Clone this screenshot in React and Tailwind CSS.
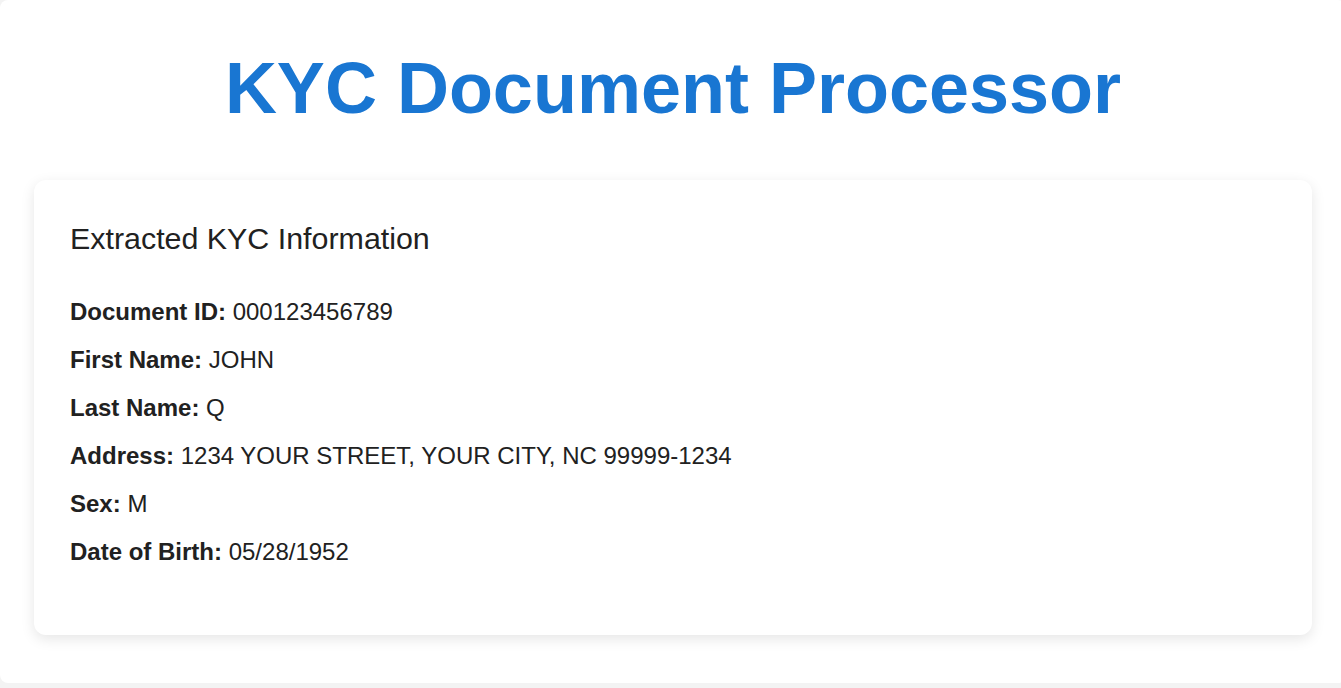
const fields = [
  { label: "Document ID:", value: "000123456789" },
  { label: "First Name:", value: "JOHN" },
  { label: "Last Name:", value: "Q" },
  { label: "Address:", value: "1234 YOUR STREET, YOUR CITY, NC 99999-1234" },
  { label: "Sex:", value: "M" },
  { label: "Date of Birth:", value: "05/28/1952" },
];

export default function App() {
  return (
    <div
      className="min-h-[688px] overflow-hidden bg-[#f3f3f3] text-[#212121]"
      style={{ fontFamily: '"Liberation Sans", Arial, sans-serif' }}
    >
      <div className="h-[683px] w-[1346px] rounded-lg bg-white pt-[52px]">
        <h1 className="text-center text-[72px] font-bold leading-[72px] text-[#1976d2]">
          KYC Document Processor
        </h1>

        <div className="mx-[34px] mt-[56px] h-[455px] rounded-xl bg-white px-9 pt-10 shadow-[0_4px_14px_rgba(0,0,0,0.10)]">
          <h2 className="text-[30.4px] leading-9 text-[#212121]">
            Extracted KYC Information
          </h2>

          <div className="mt-[38px] flex flex-col gap-3">
            {fields.map((field) => (
              <p key={field.label} className="text-[24px] leading-9">
                <strong className="font-bold">{field.label}</strong>{" "}
                {field.value}
              </p>
            ))}
          </div>
        </div>
      </div>
    </div>
  );
}
